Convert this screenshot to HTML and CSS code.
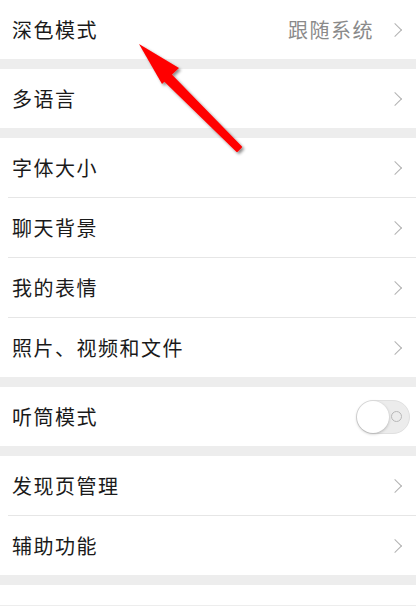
FILE: index.html
```html
<!DOCTYPE html>
<html lang="zh-CN">
<head>
    <meta charset="UTF-8">
    <meta name="viewport" content="width=device-width, initial-scale=1.0">
    <title>通用</title>
    <link rel="stylesheet" href="styles.css">
</head>
<body>

<div class="page">
    <div class="group">
        <div class="item item-first">
            <span class="label">深色模式</span>
            <span class="value">跟随系统</span>
            <span class="chevron"></span>
        </div>
    </div>

    <div class="group">
        <div class="item">
            <span class="label">多语言</span>
            <span class="chevron"></span>
        </div>
    </div>

    <div class="group">
        <div class="item">
            <span class="label">字体大小</span>
            <span class="chevron"></span>
        </div>
        <div class="item">
            <span class="label">聊天背景</span>
            <span class="chevron"></span>
        </div>
        <div class="item">
            <span class="label">我的表情</span>
            <span class="chevron"></span>
        </div>
        <div class="item">
            <span class="label">照片、视频和文件</span>
            <span class="chevron"></span>
        </div>
    </div>

    <div class="group">
        <div class="item">
            <span class="label">听筒模式</span>
            <span class="switch"><span class="knob"></span><span class="off-mark"></span></span>
        </div>
    </div>

    <div class="group">
        <div class="item">
            <span class="label">发现页管理</span>
            <span class="chevron"></span>
        </div>
        <div class="item">
            <span class="label">辅助功能</span>
            <span class="chevron"></span>
        </div>
    </div>

    <div class="group group-last"></div>

    <!-- 标注箭头 -->
    <svg class="arrow" width="416" height="200" viewBox="0 0 416 200">
        <defs>
            <filter id="shadow" x="-20%" y="-20%" width="140%" height="140%">
                <feDropShadow dx="2" dy="2" stdDeviation="1.6" flood-color="#000" flood-opacity="0.45"/>
            </filter>
        </defs>
        <g filter="url(#shadow)" fill="#ff0000">
            <path d="M237 151 L241 147 L167 71 L161 77 Z" stroke="#ff0000" stroke-width="2" stroke-linejoin="round"/>
            <path d="M139 44 L179 68 L162 84 Z"/>
        </g>
    </svg>
</div>

</body>
</html>
```

FILE: styles.css
```css
body {
    margin: 0;
    padding: 0;
    background-color: #ededed;
    font-family: 'Noto Sans CJK SC', 'Noto Sans', sans-serif;
    color: #1a1a1a;
}

.page {
    position: relative;
    width: 416px;
    height: 606px;
    overflow: hidden;
    background-color: #ededed;
}

.group {
    background-color: #ffffff;
    margin-bottom: 10px;
}

.group-last {
    height: 20px;
    margin-top: 2px;
}

.item {
    display: flex;
    align-items: center;
    height: 59px;
    padding: 0 12px;
    position: relative;
    font-size: 20px;
}

.item + .item {
    border-top: 1px solid #e6e6e6;
    margin-left: 8px;
    padding-left: 4px;
}

.label {
    flex: 1;
    letter-spacing: 1.5px;
}

.value {
    color: #8a8a8a;
    margin-right: 16px;
    letter-spacing: 1.5px;
}

.chevron {
    width: 9px;
    height: 9px;
    border-top: 1.5px solid #b2b2b2;
    border-right: 1.5px solid #b2b2b2;
    transform: rotate(45deg);
    margin-right: 4px;
}

.switch {
    position: relative;
    width: 52px;
    height: 32px;
    border-radius: 17px;
    background-color: #ececec;
    border: 1px solid #e0e0e0;
    margin-right: -6px;
}

.knob {
    position: absolute;
    left: 0;
    top: 0;
    width: 32px;
    height: 32px;
    border-radius: 50%;
    background-color: #ffffff;
    box-shadow: 0 1px 3px rgba(0, 0, 0, 0.25);
}

.off-mark {
    position: absolute;
    right: 7px;
    top: 10px;
    width: 9px;
    height: 9px;
    border-radius: 50%;
    border: 1.5px solid #b8b8b8;
}

.arrow {
    position: absolute;
    left: 0;
    top: 0;
    pointer-events: none;
}
```
